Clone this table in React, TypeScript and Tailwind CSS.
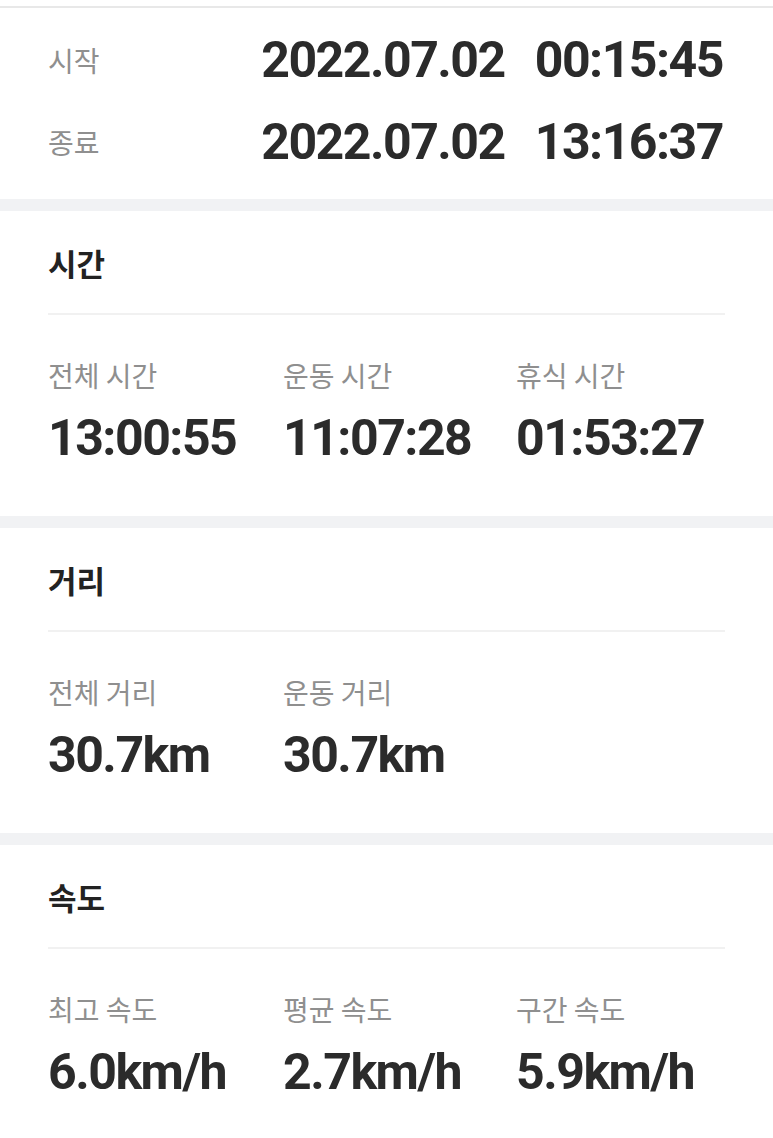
import React from "react";

const KR = "font-['Noto_Sans_CJK_KR','Noto_Sans',sans-serif]";
const NUM = "font-['Roboto','Noto_Sans_CJK_KR',sans-serif]";

function Band() {
  return <div className="h-[12px] bg-[#f1f2f4]" />;
}

function StatSection({
  title,
  items,
}: {
  title: string;
  items: { label: string; value: string }[];
}) {
  return (
    <section className="bg-white px-[48px] pt-[34px] pb-[50px]">
      <h2 className={`${KR} text-[31px] leading-[36px] font-semibold text-[#222222]`}>{title}</h2>
      <div className="mt-[32px] h-[2px] bg-[#f1f1f1]" />
      <div className="mt-[43px] grid grid-cols-[235px_233px_1fr]">
        {items.map((it) => (
          <div key={it.label} className="flex flex-col">
            <span className={`${KR} text-[28px] leading-[34px] text-[#8f8f8f]`}>{it.label}</span>
            <span className={`${NUM} mt-[18px] text-[50px] leading-[56px] font-bold text-[#2b2b2b] tracking-[-1.5px]`}>
              {it.value}
            </span>
          </div>
        ))}
      </div>
    </section>
  );
}

export default function App() {
  return (
    <div className="w-[773px] h-[1138px] overflow-hidden bg-white">
      <div className="h-[6px] bg-white" />
      <div className="h-[2px] bg-[#e8e8e8]" />
      <section className="bg-white pl-[48px] pr-[50px] pt-[11px] pb-[16px]">
        {[
          { label: "시작", date: "2022.07.02", time: "00:15:45" },
          { label: "종료", date: "2022.07.02", time: "13:16:37" },
        ].map((r) => (
          <div key={r.label} className="flex h-[82px] items-center justify-between">
            <span className={`${KR} text-[28px] text-[#8f8f8f]`}>{r.label}</span>
            <span className={`${NUM} flex gap-[30px] text-[50px] font-bold text-[#2b2b2b] tracking-[-1.5px]`}>
              <span>{r.date}</span>
              <span>{r.time}</span>
            </span>
          </div>
        ))}
      </section>
      <Band />
      <StatSection
        title="시간"
        items={[
          { label: "전체 시간", value: "13:00:55" },
          { label: "운동 시간", value: "11:07:28" },
          { label: "휴식 시간", value: "01:53:27" },
        ]}
      />
      <Band />
      <StatSection
        title="거리"
        items={[
          { label: "전체 거리", value: "30.7km" },
          { label: "운동 거리", value: "30.7km" },
        ]}
      />
      <Band />
      <StatSection
        title="속도"
        items={[
          { label: "최고 속도", value: "6.0km/h" },
          { label: "평균 속도", value: "2.7km/h" },
          { label: "구간 속도", value: "5.9km/h" },
        ]}
      />
    </div>
  );
}
